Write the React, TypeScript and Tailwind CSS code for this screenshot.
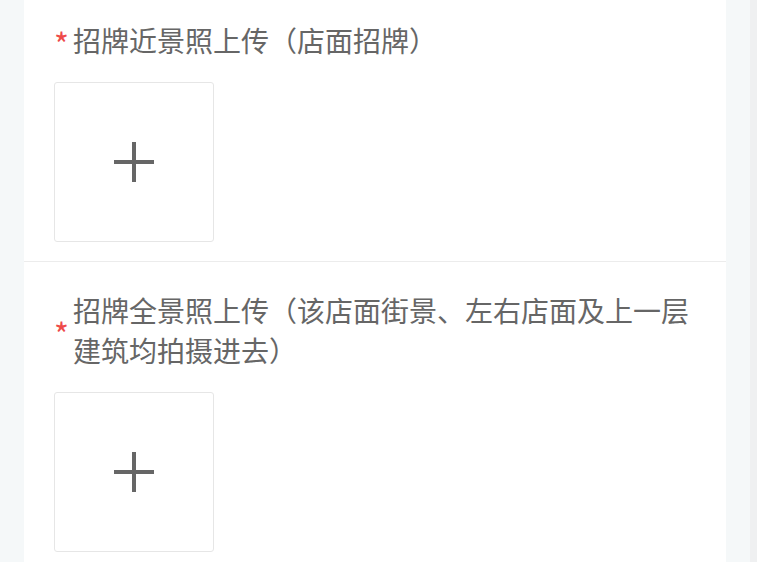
const fields = [
  { id: "near", label: "招牌近景照上传（店面招牌）" },
  { id: "full", label: "招牌全景照上传（该店面街景、左右店面及上一层建筑均拍摄进去）" },
];

function UploadBox() {
  return (
    <div className="w-[160px] h-[160px] rounded-[3px] border border-[#e6e6e6] bg-white flex items-center justify-center">
      {/* plus glyph: two 4px bars, 40px long */}
      <div className="relative w-[40px] h-[40px]">
        <div className="absolute left-[18px] top-0 w-[4px] h-[40px] bg-[#666666]" />
        <div className="absolute top-[18px] left-0 h-[4px] w-[40px] bg-[#666666]" />
      </div>
    </div>
  );
}

function Field({ label, first }: { label: string; first?: boolean }) {
  return (
    <div className={`px-[30px] pb-[19px] ${first ? "pt-[20px]" : "pt-[28px] border-t border-[#ececec]"}`}>
      <div className="flex items-center">
        <span className="w-[19px] shrink-0 text-[32px] leading-[40px] text-[#ee4a4a] translate-y-[3px]">*</span>
        <p className="flex-1 text-[28px] leading-[40px] text-[#666666]">{label}</p>
      </div>
      <div className="mt-[22px]">
        <UploadBox />
      </div>
    </div>
  );
}

export default function App() {
  return (
    <div
      className="flex w-full h-[562px] overflow-hidden bg-[#f5f8f9]"
      style={{ fontFamily: "'Noto Sans CJK SC', 'Noto Sans', sans-serif" }}
    >
      <div className="w-[24px] shrink-0" />
      <div className="w-[702px] shrink-0 bg-white">
        {fields.map((f, i) => (
          <Field key={f.id} label={f.label} first={i === 0} />
        ))}
      </div>
      <div className="w-[24px] shrink-0" />
      <div className="flex-1 bg-[#eff0f1]" />
    </div>
  );
}
